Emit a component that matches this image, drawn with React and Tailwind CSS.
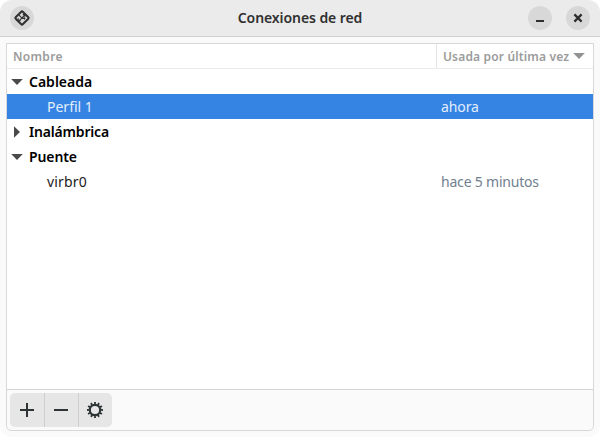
import React from "react";

function Expander({ open }) {
  return (
    <svg className="block h-3 w-3 shrink-0" viewBox="0 0 12 12" fill="#4a4a4a">
      {open ? <path d="M0.2 3h11.6L6 9z" /> : <path d="M3 0.2v11.6L9 6z" />}
    </svg>
  );
}

function Group({ name, open, tracking }) {
  return (
    <div className="flex h-[25px] items-center gap-[6px] pl-1">
      <Expander open={open} />
      <span className={`text-[14px] font-semibold text-black ${tracking}`}>{name}</span>
    </div>
  );
}

function Connection({ name, used, selected, nameTracking, usedTracking }) {
  return (
    <div className={`flex h-[25px] items-center text-[14px] ${selected ? "bg-[#3584e4] text-[#e3eefb]" : "text-[#1a1a1a]"}`}>
      <span className={`w-[434px] pl-10 ${nameTracking}`}>{name}</span>
      <span className={`${usedTracking} ${selected ? "" : "text-[#708090]"}`}>{used}</span>
    </div>
  );
}

export default function App() {
  return (
    <div className="h-[437px] w-[600px] bg-white">
      <div className="flex h-full flex-col overflow-hidden rounded-xl bg-[#fafafa] whitespace-nowrap" style={{ fontFamily: '"Noto Sans", sans-serif' }}>
        <header className="flex h-[37px] shrink-0 items-center border-b border-[#cfcfcf] bg-[#ebebeb] px-[10px]">
          <div className="flex w-[62px] items-center">
            <div className="flex h-6 w-6 items-center justify-center rounded-full bg-[#d8d8d8]">
              <svg className="h-4 w-4" viewBox="0 0 16 16" fill="none" stroke="#303030">
                <rect x="3" y="3" width="10" height="10" rx="1.4" transform="rotate(45 8 8)" strokeWidth="2" />
                <path d="M5 5.2l3 3M10.8 5L5.2 10.8M8.2 8.4h3.2" strokeWidth="1.1" />
                <path d="M8.8 4.6h2v2.2M4.2 8.2v2.6h2.4M10.5 7.4v2.2" strokeWidth="1.1" />
              </svg>
            </div>
          </div>
          <h1 className="flex-1 pb-[2px] text-center text-[14px] font-semibold tracking-[-0.08px] text-[#303030]">Conexiones de red</h1>
          <div className="flex w-[62px] justify-between">
            <button className="flex h-6 w-6 items-center justify-center rounded-full bg-[#d8d8d8]">
              <svg className="h-4 w-4" viewBox="0 0 16 16" fill="#2e2e2e"><path d="M4 10h8v2H4z" /></svg>
            </button>
            <button className="flex h-6 w-6 items-center justify-center rounded-full bg-[#d8d8d8]">
              <svg className="h-4 w-4" viewBox="0 0 16 16" fill="none" stroke="#2e2e2e" strokeWidth="2.2"><path d="M4.4 4.4l7.2 7.2M11.6 4.4l-7.2 7.2" /></svg>
            </button>
          </div>
        </header>
        <main className="mx-[6px] mt-[6px] mb-[6px] flex min-h-0 flex-1 flex-col rounded-b-[5px] border border-[#d8d8d8]">
          <section className="min-h-0 flex-1 bg-white">
            <div className="flex h-[25px] items-center border-b border-[#ebebeb] text-[12px] font-semibold text-[#9b9b9b]">
              <div className="flex h-full w-[430px] items-center border-r border-[#e6e6e6] pt-[2px] pl-[6px]"><span className="tracking-[0.3px]">Nombre</span></div>
              <div className="flex flex-1 items-center pl-[6px]">
                <span className="w-[130px] pt-[2px] tracking-[0.16px]">Usada por última vez</span>
                <svg className="h-3 w-3" viewBox="0 0 12 12" fill="#929292"><path d="M0.2 3h11.6L6 9z" /></svg>
              </div>
            </div>
            <Group name="Cableada" open tracking="" />
            <Connection name="Perfil 1" used="ahora" selected nameTracking="" usedTracking="tracking-[-0.1px]" />
            <Group name="Inalámbrica" tracking="tracking-[-0.18px]" />
            <Group name="Puente" open tracking="tracking-[-0.1px]" />
            <Connection name="virbr0" used="hace 5 minutos" nameTracking="tracking-[0.15px]" usedTracking="tracking-[-0.2px]" />
          </section>
          <footer className="flex h-[41px] shrink-0 border-t border-[#d5d5d5] px-[3px] pt-[3px]">
            <div className="flex h-[34px] w-[102px] overflow-hidden rounded-[5px] bg-[#e6e6e6]">
              <button className="flex w-[35px] items-center justify-center border-r border-[#cecece]">
                <svg className="h-4 w-4" viewBox="0 0 16 16" fill="#2e3436"><path d="M7 1h2v6h6v2H9v6H7V9H1V7h6z" /></svg>
              </button>
              <button className="flex w-[34px] items-center border-r border-[#cecece] pl-2">
                <svg className="h-4 w-4" viewBox="0 0 16 16" fill="#2e3436"><path d="M1 7h14v2H1z" /></svg>
              </button>
              <button className="flex flex-1 items-center pl-2">
                <svg className="h-4 w-4" viewBox="0 0 16 16" fill="none" stroke="#2e3436">
                  <circle cx="8" cy="8" r="5.2" strokeWidth="2.2" />
                  <circle cx="8" cy="8" r="6.9" strokeWidth="2.2" pathLength="120" strokeDasharray="5 5" strokeDashoffset="2.5" />
                </svg>
              </button>
            </div>
          </footer>
        </main>
      </div>
    </div>
  );
}
